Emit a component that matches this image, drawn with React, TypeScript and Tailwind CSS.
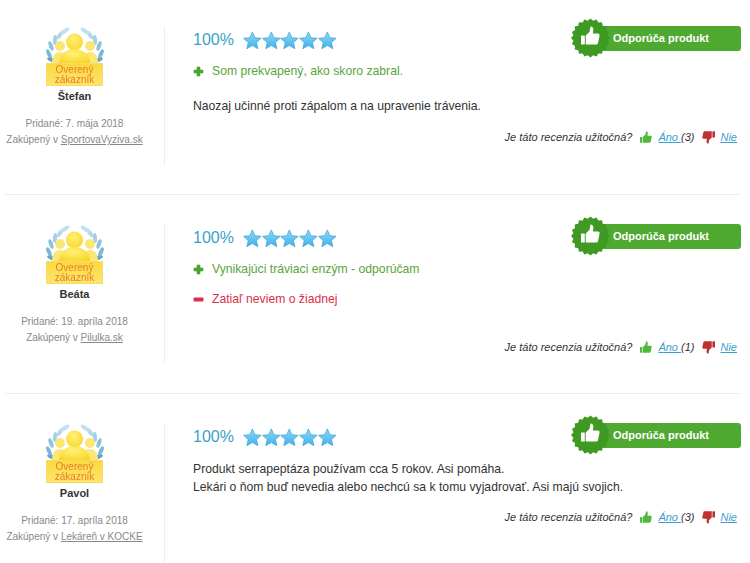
const reviews = [
  {
    name: "Štefan",
    date: "Pridané: 7. mája 2018",
    shop: "SportovaVyziva.sk",
    pro: "Som prekvapený, ako skoro zabral.",
    text: ["Naozaj učinné proti zápalom a na upravenie trávenia."],
    yes: "(3)",
    gap: "mt-[17px]",
    footGap: "mt-[15px]",
    side: "mt-[13px]",
  },
  {
    name: "Beáta",
    date: "Pridané: 19. apríla 2018",
    shop: "Pilulka.sk",
    pro: "Vynikajúci tráviaci enzým - odporúčam",
    con: "Zatiaľ neviem o žiadnej",
    text: [],
    yes: "(1)",
    gap: "mt-[17px]",
    footGap: "mt-[32px]",
    side: "mt-[13px]",
  },
  {
    name: "Pavol",
    date: "Pridané: 17. apríla 2018",
    shop: "Lekáreň v KOCKE",
    text: [
      "Produkt serrapeptáza používam cca 5 rokov. Asi pomáha.",
      "Lekári o ňom buď nevedia alebo nechcú sa k tomu vyjadrovať. Asi majú svojich.",
    ],
    yes: "(3)",
    gap: "mt-[9px]",
    footGap: "mt-[14px]",
    side: "mt-[13px]",
  },
];

function burstPoints(cx: number, cy: number, outer: number, inner: number, teeth: number) {
  const pts: string[] = [];
  for (let i = 0; i < teeth * 2; i++) {
    const r = i % 2 === 0 ? outer : inner;
    const a = (Math.PI * i) / teeth;
    pts.push(`${(cx + r * Math.cos(a)).toFixed(2)},${(cy + r * Math.sin(a)).toFixed(2)}`);
  }
  return pts.join(" ");
}

function Star() {
  return (
    <svg width="18.7" height="19" viewBox="0 0 24 24" className="shrink-0">
      <defs>
        <linearGradient id="starFill" x1="0" y1="0" x2="0" y2="1">
          <stop offset="0" stopColor="#8fd8f7" />
          <stop offset="1" stopColor="#3fb2ea" />
        </linearGradient>
      </defs>
      <path
        d="M12 1l3.3 7.4 8 .8-6 5.4 1.8 7.9L12 18.4l-7.1 4.1 1.8-7.9-6-5.4 8-.8z"
        fill="url(#starFill)"
        stroke="#4aa5d6"
        strokeWidth="1"
        strokeLinejoin="round"
      />
    </svg>
  );
}

// blocky thumb: cuff plus mitten, same shape as the badge and the vote icons
function Thumb({ size, className }: { size: number; className?: string }) {
  return (
    <svg width={size} height={size} viewBox="0 0 20 20" className={className} fill="currentColor">
      <rect x="0" y="10" width="4" height="9.5" rx="0.5" />
      <path d="M5 10 9 6 10 .5c2 0 3.2 1.4 3 3.2L12.5 8H17.5c1.5 0 2.2 1 2 2.2L18 17.5c-.3 1.2-1 2-2.2 2H5z" />
    </svg>
  );
}

// one branch of the wreath, mirrored for the right side
function Laurel({ flip }: { flip?: boolean }) {
  const leaves = [
    [6, 33, -70, "#5fa3c9"],
    [3, 27, -25, "#7db6d6"],
    [5, 19, -20, "#8dc1dd"],
    [9, 13, 5, "#a5cfe5"],
    [14, 8, 35, "#b5d8ea"],
    [19, 4, 55, "#c3e0ee"],
  ] as const;
  return (
    <g transform={flip ? "translate(58 0) scale(-1 1)" : undefined}>
      {leaves.map(([x, y, r, c]) => (
        <ellipse key={`${x}-${y}`} cx={x} cy={y} rx="2" ry="5" fill={c} transform={`rotate(${r} ${x} ${y})`} />
      ))}
    </g>
  );
}

function VerifiedBadge() {
  return (
    <div className="mt-[1px] flex flex-col items-center w-[58px] blur-[0.3px]">
      <svg width="58" height="36" viewBox="0 0 58 36" className="block">
        <defs>
          <radialGradient id="personFill" cx="0.45" cy="0.35" r="0.8">
            <stop offset="0" stopColor="#fff27a" />
            <stop offset="1" stopColor="#f8d21c" />
          </radialGradient>
        </defs>
        <Laurel />
        <Laurel flip />
        <circle cx="14" cy="19" r="5" fill="#fbe774" />
        <circle cx="44" cy="19" r="5" fill="#fbe774" />
        <path d="M6 36c0-8 4-11 8-11s8 3 8 11z" fill="#fbe774" />
        <path d="M36 36c0-8 4-11 8-11s8 3 8 11z" fill="#fbe774" />
        <circle cx="28.5" cy="15" r="8.5" fill="url(#personFill)" />
        <path d="M13 36c0-8 7-14 15.5-14S44 28 44 36z" fill="url(#personFill)" />
      </svg>
      <div className="w-[57px] h-[23px] bg-gradient-to-b from-[#fbd940] to-[#fde56a] border border-[#f6da6a] text-[#e5802c] text-[10px] leading-[10px] text-center flex flex-col justify-center">
        <span>Overený</span>
        <span>zákazník</span>
      </div>
    </div>
  );
}

function RecommendBadge() {
  return (
    <div className="relative w-[170px] h-[40px]">
      <div className="absolute left-[20px] right-0 top-[8px] h-[25px] bg-[#4fa82f] rounded-[3px] pl-[22px] flex items-center text-white text-[11px] font-bold">
        Odporúča produkt
      </div>
      <svg width="39" height="40" viewBox="0 0 40 40" className="absolute left-0 top-0">
        <polygon points={burstPoints(20, 20, 20, 17.8, 20)} fill="#3f9a24" />
      </svg>
      <Thumb size={19} className="absolute left-[10px] top-[8px] text-white" />
    </div>
  );
}

function PlusIcon() {
  return (
    <svg width="11" height="11" viewBox="0 0 11 11" className="shrink-0">
      <path d="M4 1h3v3h3v3H7v3H4V7H1V4h3z" fill="#4aa42f" stroke="#4aa42f" strokeWidth="0.6" strokeLinejoin="round" />
    </svg>
  );
}

function MinusIcon() {
  return (
    <svg width="11" height="11" viewBox="0 0 11 11" className="shrink-0">
      <rect x="0.5" y="3.5" width="10" height="4" rx="1" fill="#dc2f48" />
    </svg>
  );
}

export default function App() {
  return (
    <div className="w-[750px] h-[563px] overflow-hidden bg-white text-[#333] font-['Liberation_Sans',Arial,sans-serif]">
      {reviews.map((r, i) => (
        <div
          key={r.name}
          className={`ml-[5px] mr-[9px] flex items-start ${i === 0 ? "pt-[26px] h-[194px]" : "pt-[29px] h-[199px] border-t border-[#eeeeee]"}`}
        >
          <div className="w-[160px] h-[140px] border-r border-[#eeeeee] pr-[20px] flex flex-col items-center shrink-0">
            <VerifiedBadge />
            <div className="mt-[3px] text-[11px] leading-[14px] font-bold text-[#333]">{r.name}</div>
            <div className={`${r.side} text-[10px] leading-[16px] text-[#888] whitespace-nowrap`}>{r.date}</div>
            <div className="text-[10px] leading-[16px] text-[#888] whitespace-nowrap">
              Zakúpený v <span className="underline">{r.shop}</span>
            </div>
          </div>
          <div className="flex-1 pl-[28px] pr-[4px]">
            <div className="flex justify-between">
              <div className="flex items-center h-[28px]">
                <span className="w-[50px] text-[16px] text-[#3a9fcb]">100%</span>
                <div className="flex">
                  <Star />
                  <Star />
                  <Star />
                  <Star />
                  <Star />
                </div>
              </div>
              <div className="-mt-[8px] -mr-[4px] h-[0px]">
                <RecommendBadge />
              </div>
            </div>
            {r.pro && (
              <div className="mt-[8px] flex items-center gap-[8px] h-[18px] text-[12.2px] text-[#5aa43c]">
                <PlusIcon />
                {r.pro}
              </div>
            )}
            {r.con && (
              <div className="mt-[12px] flex items-center gap-[8px] h-[18px] text-[12.2px] text-[#d9304a]">
                <MinusIcon />
                {r.con}
              </div>
            )}
            {r.text.length > 0 && (
              <div className={`${r.gap} text-[12.2px] leading-[18px] text-[#333]`}>
                {r.text.map((t) => (
                  <div key={t}>{t}</div>
                ))}
              </div>
            )}
            <div className={`${r.footGap} flex justify-end items-center h-[14px] text-[11px] italic text-[#333]`}>
              <span>Je táto recenzia užitočná?</span>
              <Thumb size={12} className="ml-[8px] text-[#52b83c]" />
              <span className="ml-[6px] text-[#3a9fcb] underline whitespace-pre">Áno </span>
              <span>{r.yes}</span>
              <Thumb size={13} className="ml-[8px] text-[#bf3030] rotate-180" />
              <span className="ml-[5px] text-[#3a9fcb] underline">Nie</span>
            </div>
          </div>
        </div>
      ))}
    </div>
  );
}
